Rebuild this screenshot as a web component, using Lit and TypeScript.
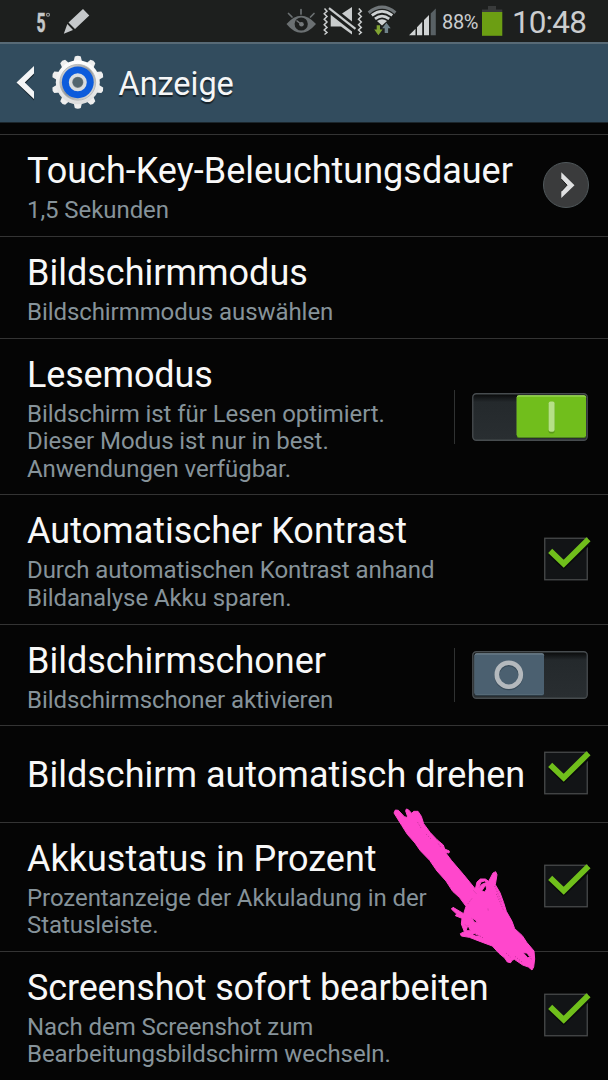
import { LitElement, html, css, svg, nothing } from "lit";
import { customElement, property } from "lit/decorators.js";
import { classMap } from "lit/directives/class-map.js";

type Control = "none" | "more" | "on" | "off" | "check";
interface Item {
  title: string;
  lines: string[];
  control: Control;
  size: string;
  tight?: boolean;
}

const ITEMS: Item[] = [
  { title: "Touch-Key-Beleuchtungsdauer", lines: ["1,5 Sekunden"], control: "more", size: "one" },
  { title: "Bildschirmmodus", lines: ["Bildschirmmodus auswählen"], control: "none", size: "one" },
  {
    title: "Lesemodus",
    lines: ["Bildschirm ist für Lesen optimiert.", "Dieser Modus ist nur in best.", "Anwendungen verfügbar."],
    control: "on",
    size: "three",
    tight: true,
  },
  {
    title: "Automatischer Kontrast",
    lines: ["Durch automatischen Kontrast anhand", "Bildanalyse Akku sparen."],
    control: "check",
    size: "two",
  },
  { title: "Bildschirmschoner", lines: ["Bildschirmschoner aktivieren"], control: "off", size: "one" },
  { title: "Bildschirm automatisch drehen", lines: [], control: "check", size: "zero" },
  {
    title: "Akkustatus in Prozent",
    lines: ["Prozentanzeige der Akkuladung in der", "Statusleiste."],
    control: "check",
    size: "two",
  },
  {
    title: "Screenshot sofort bearbeiten",
    lines: ["Nach dem Screenshot zum", "Bearbeitungsbildschirm wechseln."],
    control: "check",
    size: "two",
    tight: true,
  },
];

@customElement("status-bar")
class StatusBar extends LitElement {
  static styles = css`
    :host {
      display: flex;
      height: 42px;
      background: #1d1f1e;
      color: #cbcdcf;
      font-family: Roboto, "Noto Sans", sans-serif;
    }
    svg { display: block; flex: none; }
    .temp { margin-left: 36px; }
    .eye { margin-left: auto; }
    .pct { width: 41px; padding-left: 1px; box-sizing: border-box; font-size: 20px; line-height: 44px; letter-spacing: -0.35px; }
    .time { width: 104px; padding-left: 8px; box-sizing: border-box; font-size: 31.5px; line-height: 46px; letter-spacing: -0.9px; }
  `;
  render() {
    return html`
      <svg class="temp" width="56" height="42" viewBox="36 0 56 42">
        <text x="36.5" y="31.5" font-size="25" font-weight="700" textLength="9" lengthAdjust="spacingAndGlyphs" fill="#c5c8ca" stroke="#c5c8ca" stroke-width=".6">5</text>
        <circle cx="48" cy="14.8" r="1.5" fill="none" stroke="#9da1a3" stroke-width="1.1" />
        <path d="M83 9 89.3 15.5 75 29 68.5 22.5ZM67.3 24 73 30 63.8 33.8Z" fill="#c5c8ca" />
      </svg>
      <svg class="eye" width="118" height="42" viewBox="285 0 118 42">
        <path d="M286.5 24Q301 7.500 316 24Q301 41.500 286.500 24Z" fill="#6b7072" />
        <circle cx="301.200" cy="24" r="6.600" fill="#1d1f1e" />
        <path d="M301 9.500V14M288.500 13.500 292 17M314 13.500 310.500 17" stroke="#6b7072" stroke-width="1.700" stroke-linecap="round" />
        <circle cx="301.500" cy="24.200" r="2.300" fill="#75797b" />
        <path d="M301 24 296.500 20.500" stroke="#75797b" stroke-width="1.500" />
        <path d="M324.500 8.500 327 11.200 324.200 13.800 327 16.500 324.200 19.200 327 22 324.200 24.700 327 27.400 324.200 30 327 32.500 324.500 34.500M358.800 8.500 361.300 11.200 358.500 13.800 361.300 16.500 358.500 19.200 361.300 22 358.500 24.700 361.300 27.400 358.500 30 361.300 32.500 358.800 34.500" fill="none" stroke="#c9cccd" stroke-width="1.500" />
        <path d="M330.700 14.800 352 31.500V34.500L341 26.500H330.700ZM342 13.500 352 7V21.500Z" fill="#c9cccd" />
        <path d="M329.500 11 355.500 31.200" stroke="#1d1f1e" stroke-width="1.600" />
        <path d="M329 8.200 355.500 28.800" stroke="#c9cccd" stroke-width="2.200" />
        <path d="M368.700 12.700Q382 1.700 395.400 12.700" fill="none" stroke="#6f7578" stroke-width="3.200" />
        <path d="M371.800 15.400Q382 7.500 392.300 15.400M375 18.900Q382 13.200 389.200 18.900" fill="none" stroke="#cfd2d3" stroke-width="2.700" />
        <path d="M377 21Q382 17.400 387 21L382 25.500Z" fill="#cfd2d3" />
        <path d="M376.700 25.300H380V29.500H382.600L378.400 35.200 374.200 29.500H376.700Z" fill="#81a433" />
        <path d="M384.700 33V28.300H382.200L386.400 22.800 390.700 28.300H388.100V33Z" fill="#70828b" />
      </svg>
      <svg width="38" height="42" viewBox="403 0 38 42">
        <path d="M409 35.300 415.500 28.800V35.300ZM417 35.300V27.300L422.200 21.800V35.300ZM424 35.300V20L429 15V35.300Z" fill="#d0d3d4" />
        <path d="M430.700 35.300V13.500L435.800 8.500V35.300Z" fill="#596165" />
      </svg>
      <span class="pct">88%</span>
      <svg width="22" height="42" viewBox="482 0 22 42">
        <path d="M488 6H496V9.500H502.300V12H482V9.500H488Z" fill="#393b3b" />
        <path d="M482 12H502.300V35.800H482Z" fill="#6c9e13" />
      </svg>
      <span class="time">10:48</span>
    `;
  }
}

@customElement("title-bar")
class TitleBar extends LitElement {
  static styles = css`
    :host {
      display: flex;
      align-items: center;
      box-sizing: border-box;
      height: 81px;
      border-top: 2px solid #586a76;
      border-bottom: 1px solid #1c262c;
      background: #324c5e;
      font-family: Roboto, "Noto Sans", sans-serif;
    }
    svg { display: block; flex: none; }
    .name {
      margin-left: 12.500px;
      padding-top: 2px;
      font-size: 32.500px;
      line-height: 40px;
      color: #f5f6f7;
      text-shadow: 0 2px 1px #16222a;
      letter-spacing: -0.05px;
    }
  `;
  render() {
    const teeth = Array.from({ length: 10 }, (_, i) =>
      svg`<path d="M72.600 66 74.800 56.600Q77.800 55 80.800 56.600L83 66Z" transform=${`rotate(${i * 36} 77.800 82.300)`} />`
    );
    return html`
      <svg width="106" height="78" viewBox="0 44 106 78">
        <defs>
          <linearGradient id="metal" x1="0" y1="0" x2="0" y2="1">
            <stop offset="0" stop-color="#ffffff" />
            <stop offset="1" stop-color="#dddddd" />
          </linearGradient>
          <linearGradient id="ring" x1="0" y1="0" x2="1" y2="1">
            <stop offset="0" stop-color="#e6e6e6" />
            <stop offset=".5" stop-color="#929699" />
            <stop offset="1" stop-color="#f1f1f1" />
          </linearGradient>
        </defs>
        <path d="M34 67.500 17.200 84 34 100.500V93L24.800 84 34 75Z" fill="#17242d" />
        <path d="M34 66 16.500 82.500 34 99V91.500L24.800 82.500 34 73.500Z" fill="#f4f5f6" />
        <g fill="#eeeeee">${teeth}</g>
        <circle cx="77.800" cy="82.300" r="22" fill="url(#metal)" />
        <circle cx="77.800" cy="82.300" r="17.900" fill="url(#ring)" stroke="#aeb1b3" stroke-width=".8" />
        <circle cx="77.800" cy="82.300" r="15.900" fill="#0c5bdc" />
        <circle cx="77.800" cy="82.300" r="7.300" fill="#7e8589" stroke="#d9dddf" stroke-width="3.400" />
        <circle cx="77.800" cy="82.300" r="5" fill="#53666f" />
      </svg>
      <span class="name">Anzeige</span>
    `;
  }
}

@customElement("setting-control")
class SettingControl extends LitElement {
  @property() kind: Control = "none";

  static styles = css`
    :host { display: block; }
    svg { display: block; }
    .more { margin: 0 18px 1px 0; }
    .check { margin: 0 16px 2px 0; }
    .switch { display: flex; align-items: center; margin: 0 20px 0 0; }
    .divider { width: 1px; height: 54px; background: #303232; margin-right: 17px; }
  `;
  render() {
    switch (this.kind) {
      case "more":
        return html`<svg class="more" width="48" height="48" viewBox="542 161 48 48">
          <circle cx="566" cy="185" r="22.500" fill="#3a3b3c" stroke="#50585b" stroke-width="1" />
          <path d="M561.300 172.300 574.500 185.200 561.300 198V191.300L567 185.200 561.300 179Z" fill="#e0e1e2" />
          <path d="M561.300 179 567 185.200 561.300 191.300" fill="none" stroke="#191a1a" stroke-width="1" />
        </svg>`;
      case "check":
        return html`<svg class="check" width="48" height="46" viewBox="0 0 48 46">
          <rect x=".750" y="2.250" width="42.500" height="41.500" fill="#121416" stroke="#484a4b" stroke-width="1.300" />
          <path d="M6.200 15.200 19.700 27.800 44.500 4.800" transform="translate(0 1.500)" fill="none" stroke="#090b0b" stroke-width="6" />
          <path d="M6.200 14.800 19.700 27.800 44.500 3.200" fill="none" stroke="#70bf1b" stroke-width="5.800" />
        </svg>`;
      case "on":
      case "off":
        return html`<div class="switch">
          <div class="divider"></div>
          <svg width="116" height="48" viewBox="0 0 116 48">
            <defs>
              <linearGradient id="well" x1="0" y1="0" x2="0" y2="1">
                <stop offset="0" stop-color="#080909" />
                <stop offset=".18" stop-color="#24292c" />
                <stop offset="1" stop-color="#292e31" />
              </linearGradient>
            </defs>
            <rect x=".750" y=".750" width="114.500" height="46.500" rx="3.500" fill="url(#well)" stroke="#474c4f" stroke-width="1.300" />
            ${this.kind === "on"
              ? svg`
                <rect x="44.800" y="2.300" width="69.200" height="42.800" rx="2" fill="#4e8b14" />
                <rect x="44.800" y="2.300" width="69.200" height="41.200" rx="2" fill="#a5df64" />
                <rect x="44.800" y="3.600" width="69.200" height="39.900" rx="1.500" fill="#71be1c" />
                <rect x="76.600" y="9.500" width="6" height="31" rx="2" fill="#5a9a18" />
                <rect x="76.600" y="8.500" width="6" height="30.300" rx="2" fill="#b6e087" />`
              : svg`
                <rect x="2.600" y="2.300" width="69.400" height="42.500" rx="2" fill="#2f414d" />
                <rect x="2.600" y="2.300" width="69.400" height="41.500" rx="2" fill="#758590" />
                <rect x="2.600" y="3.600" width="69.400" height="39.900" rx="1.500" fill="#4b6070" />
                <circle cx="36.800" cy="25" r="12" fill="none" stroke="#384b59" stroke-width="4.600" />
                <circle cx="36.800" cy="23.700" r="12" fill="none" stroke="#b4b9bd" stroke-width="4.600" />`}
          </svg>
        </div>`;
      default:
        return nothing;
    }
  }
}

@customElement("app-root")
class AppRoot extends LitElement {
  static styles = css`
    :host {
      display: block;
      position: relative;
      width: 608px;
      height: 1080px;
      overflow: hidden;
      background: #050505;
      font-family: Roboto, "Noto Sans", sans-serif;
    }
    .list { padding-top: 11.450px; }
    .row {
      display: flex;
      align-items: center;
      box-sizing: border-box;
      border-top: 1px solid #343434;
      padding-left: 27px;
    }
    .zero { height: 96.500px; }
    .one { height: 101.600px; }
    .two { height: 129.200px; }
    .three { height: 156.800px; }
    .text { flex: 1; min-width: 0; align-self: stretch; padding-top: 14px; white-space: nowrap; }
    .zero .text { padding-top: 27px; }
    .title { font-size: 36px; line-height: 44px; color: #f8f8f8; }
    .tight .title { letter-spacing: -0.15px; }
    .sub { margin-top: 4px; font-size: 24px; line-height: 27.600px; color: #86939a; letter-spacing: -0.070px; }
    .mark { position: absolute; left: 380px; top: 789px; }
  `;
  render() {
    return html`
      <status-bar></status-bar>
      <title-bar></title-bar>
      <div class="list">
        ${ITEMS.map(
          (it) => html`<div class=${classMap({ row: true, [it.size]: true, tight: !!it.tight })}>
            <div class="text">
              <div class="title">${it.title}</div>
              ${it.lines.length ? html`<div class="sub">${it.lines.map((l) => html`<div>${l}</div>`)}</div>` : nothing}
            </div>
            <setting-control .kind=${it.control}></setting-control>
          </div>`
        )}
      </div>
      <svg class="mark" width="170" height="190" viewBox="0 0 510 570">
        <path
          fill="#ff47cc" fill-rule="evenodd" stroke="#ff47cc" stroke-width="3" stroke-linejoin="round"
          d="M42 72 46 63 55 64 73 83 84 86 77 66 79 60 85 62 95 73 101 67 114 67 124 82 131 104 150 130 171 152 190 168 194 180 208 186 207 192 196 190 214 214 250 256 286 300 291 279 301 270 316 270 326 277 339 252 347 248 351 257 346 287 360 311 371 341 379 367 396 397 404 419 427 440 440 460 462 486 464 510 461 534 456 543 445 534 428 528 403 511 396 514 392 521 382 519 374 507 357 493 337 471 318 464 294 455 268 445 244 441 241 434 253 428 244 405 246 388 226 380 230 375 214 360 219 355 251 374 258 352 238 325 218 307 198 276 171 246 149 214 121 185 105 162 82 136 65 109Z
             M296 296 303 279 314 276 320 280 306 286ZM305 306 317 288 320 300 314 309ZM429 491 441 492 450 505 443 506ZM258 425 264 409 271 425ZM274 386 287 394 292 402 283 399ZM270 433 284 434 302 441 287 441ZM323 357 327 360 324 365Z"
        />
        <path
          d="M113 100 123 117M139 136 154 151M175 164 184 177M344 291 366 342M349 315 370 362M256 407 270 424M285 434 312 448M378 492 391 504M405 502 427 520M449 501 455 513M264 344 277 327M281 305 291 316"
          fill="none" stroke="#7c1c61" stroke-width="1.500" stroke-dasharray="3 5"
        />
      </svg>
    `;
  }
}
